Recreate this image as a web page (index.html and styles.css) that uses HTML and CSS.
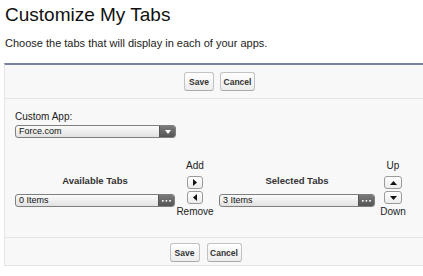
FILE: index.html
```html
<!DOCTYPE html>
<html>
<head>
<meta charset="utf-8">
<link rel="stylesheet" href="styles.css">
</head>
<body>
<div class="page">
  <h1 class="title">Customize My Tabs</h1>
  <p class="intro">Choose the tabs that will display in each of your apps.</p>
  <div class="panel">
    <div class="bar bar-top">
      <button class="btn btn-save">Save</button>
      <button class="btn btn-cancel">Cancel</button>
    </div>
    <div class="content">
      <div class="label">Custom App:</div>
      <div class="select select-app">
        <span class="select-text">Force.com</span>
        <span class="select-btn"><svg width="6" height="4" viewBox="0 0 6 4"><path d="M0 0H6L3 4Z" fill="#fff"/></svg></span>
      </div>
      <div class="dual">
        <div class="col col-left">
          <div class="col-head">Available Tabs</div>
          <div class="select">
            <span class="select-text">0 Items</span>
            <span class="select-btn"><svg width="9" height="2" viewBox="0 0 9 2"><rect x="0" y="0" width="1.6" height="1.6" fill="#fff"/><rect x="3.6" y="0" width="1.6" height="1.6" fill="#fff"/><rect x="7.2" y="0" width="1.6" height="1.6" fill="#fff"/></svg></span>
          </div>
        </div>
        <div class="movers movers-mid">
          <div class="mv-label">Add</div>
          <button class="arrow"><svg width="4" height="7" viewBox="0 0 4 7"><path d="M0 0L4 3.5L0 7Z" fill="#111"/></svg></button>
          <button class="arrow arrow-2"><svg width="4" height="7" viewBox="0 0 4 7"><path d="M4 0L0 3.5L4 7Z" fill="#111"/></svg></button>
          <div class="mv-label">Remove</div>
        </div>
        <div class="col col-right">
          <div class="col-head">Selected Tabs</div>
          <div class="select">
            <span class="select-text">3 Items</span>
            <span class="select-btn"><svg width="9" height="2" viewBox="0 0 9 2"><rect x="0" y="0" width="1.6" height="1.6" fill="#fff"/><rect x="3.6" y="0" width="1.6" height="1.6" fill="#fff"/><rect x="7.2" y="0" width="1.6" height="1.6" fill="#fff"/></svg></span>
          </div>
        </div>
        <div class="movers movers-right">
          <div class="mv-label">Up</div>
          <button class="arrow arrow-wide"><svg width="7" height="4" viewBox="0 0 7 4"><path d="M0 4L3.5 0L7 4Z" fill="#111"/></svg></button>
          <button class="arrow arrow-wide arrow-2"><svg width="7" height="4" viewBox="0 0 7 4"><path d="M0 0H7L3.5 4Z" fill="#111"/></svg></button>
          <div class="mv-label">Down</div>
        </div>
      </div>
    </div>
    <div class="bar bar-bottom">
      <button class="btn btn-save">Save</button>
      <button class="btn btn-cancel">Cancel</button>
    </div>
  </div>
</div>
</body>
</html>
```
FILE: styles.css
```css
* { box-sizing: border-box; }
html, body { margin: 0; padding: 0; background: #fff; }
body {
  font-family: "Liberation Sans", Arial, sans-serif;
  color: #222;
  overflow: hidden;
  width: 423px;
}
.page { padding-top: 3px; }
.title {
  margin: 0 0 0 5px;
  font-size: 19px;
  line-height: 24px;
  font-weight: normal;
  color: #111;
}
.intro {
  margin: 9px 0 0 5px;
  font-size: 11px;
  line-height: 14px;
  color: #222;
}
.panel {
  margin: 13px 0 0 4px;
  background: #f8f8f8;
  border-top: 2px solid #76839f;
  border-left: 1px solid #e6e6e6;
  border-bottom: 1px solid #e3e3e3;
}
.bar {
  display: flex;
  justify-content: center;
  gap: 6px;
}
.bar-top {
  padding: 7px 0 7px 11px;
  border-bottom: 1px solid #e4e4e4;
}
.bar-bottom {
  padding: 5px 17px 3px 0;
  border-top: 1px solid #e4e4e4;
  gap: 7px;
}
.btn {
  height: 19px;
  padding: 0;
  font-family: "Liberation Sans", Arial, sans-serif;
  font-size: 8.5px;
  font-weight: bold;
  color: #333;
  background: linear-gradient(#ffffff, #ededed);
  border: 1px solid #c2c2c2;
  border-bottom-color: #a9a9a9;
  border-radius: 3px;
}
.btn-save { width: 30px; }
.btn-cancel { width: 35px; }
.content {
  padding: 12px 0 19px 10px;
}
.label {
  font-size: 10px;
  line-height: 12px;
  color: #222;
}
.select {
  display: flex;
  align-items: stretch;
  height: 13px;
  border: 1px solid #7f7f7f;
  border-radius: 3px;
  background: linear-gradient(#fbfbfb, #e2e2e2);
  overflow: hidden;
}
.select-app {
  width: 161px;
  margin-top: 2px;
}
.select-text {
  flex: 1;
  font-size: 9px;
  line-height: 11px;
  padding-left: 3px;
  color: #111;
}
.select-btn {
  width: 16px;
  display: flex;
  align-items: center;
  justify-content: center;
  background: linear-gradient(#7a7a7a, #555);
  border-left: 1px solid #555;
}
.dual {
  display: flex;
  align-items: flex-start;
  margin-top: 22px;
}
.col {
  display: flex;
  flex-direction: column;
  margin-top: 15px;
}
.col-left { width: 160px; }
.col-right { width: 156px; margin-left: 5px; }
.col-head {
  font-size: 9.5px;
  line-height: 12px;
  font-weight: bold;
  color: #333;
  text-align: center;
  margin-bottom: 7px;
}
.movers {
  display: flex;
  flex-direction: column;
  align-items: center;
}
.movers-mid { width: 38px; margin-left: 1px; }
.movers-right { width: 28px; margin-left: 4px; }
.mv-label {
  font-size: 10px;
  line-height: 12px;
  color: #222;
}
.arrow {
  width: 16px;
  height: 13px;
  padding: 0;
  margin-top: 4px;
  display: flex;
  align-items: center;
  justify-content: center;
  background: linear-gradient(#ffffff, #ececec);
  border: 1px solid #9a9a9a;
  border-radius: 3px;
}
.arrow-wide { width: 18px; }
.arrow-2 { margin-top: 2px; margin-bottom: 2px; }
```
